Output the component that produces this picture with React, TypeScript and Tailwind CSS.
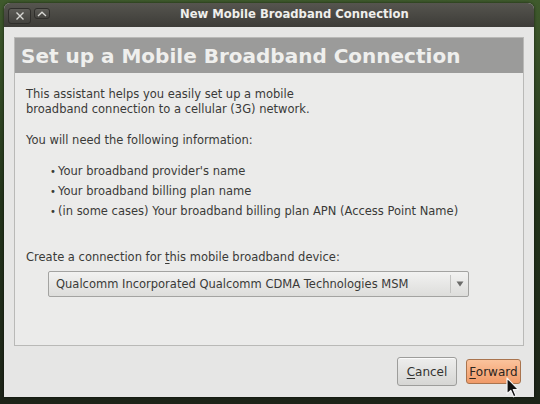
import { ReactNode } from 'react';

const font = { fontFamily: '"DejaVu Sans", Verdana, sans-serif' };

const Bullet = ({ children }: { children: ReactNode }) => (
  <li className="flex h-[20px] items-center">
    <span className="w-[8px] text-[10px]">•</span>
    <span>{children}</span>
  </li>
);

const App = () => {
  return (
    <div
      className="relative w-[540px] h-[404px] overflow-hidden bg-gradient-to-b from-[#3f5a2c] via-[#22331a] to-[#1d2418] pl-[4px] pt-[3px]"
      style={font}
    >
      {/* Window */}
      <div className="w-[530px] h-[394px] rounded-t-[6px] overflow-hidden bg-[#e6e6e5] flex flex-col shadow-[0_0_3px_rgba(0,0,0,0.6)]">
        {/* Title bar */}
        <div className="relative h-[24px] shrink-0 bg-gradient-to-b from-[#56554f] to-[#3d3c38] flex items-center">
          <div className="ml-[4px] mt-[5px] self-start flex gap-[3px]">
            <div className="w-[23px] h-[16px] rounded-[3px] border border-[#2f2e2b] bg-gradient-to-b from-[#5d5c57] to-[#44433f] flex items-center justify-center">
              <svg width="10" height="10" viewBox="0 0 10 10">
                <path d="M1.5 1.5 L8.5 8.5 M8.5 1.5 L1.5 8.5" stroke="#d8d8d4" strokeWidth="1.4" />
              </svg>
            </div>
            <div className="w-[16px] h-[11px] rounded-[3px] border border-[#2f2e2b] bg-gradient-to-b from-[#5d5c57] to-[#44433f] flex items-center justify-center">
              <svg width="10" height="6" viewBox="0 0 10 6">
                <path d="M1 5 L5 1.2 L9 5" stroke="#d8d8d4" strokeWidth="1.3" fill="none" />
              </svg>
            </div>
          </div>
          <span className="absolute left-[176px] top-[6px] text-[11.6px] font-bold text-[#efefec] leading-none">
            New Mobile Broadband Connection
          </span>
        </div>

        {/* Body */}
        <div className="flex-1 px-[10px] pt-[10px] flex flex-col">
          <div className="h-[309px] border border-[#b9b9b7] bg-[#ebebea] flex flex-col">
            <div className="h-[35px] bg-[#9b9b9a] flex items-center px-[6px]">
              <span className="text-[20px] font-bold text-[#efefed] leading-none">
                Set up a Mobile Broadband Connection
              </span>
            </div>
            <div className="pl-[11px] pr-[10px] pt-[14px] text-[11.5px] text-[#3a3a38] leading-[15px]">
              <p>
                This assistant helps you easily set up a mobile
                <br />
                broadband connection to a cellular (3G) network.
              </p>
              <p className="mt-[16px]">You will need the following information:</p>
              <ul className="mt-[13px] pl-[24px]">
                <Bullet>Your broadband provider's name</Bullet>
                <Bullet>Your broadband billing plan name</Bullet>
                <Bullet>(in some cases) Your broadband billing plan APN (Access Point Name)</Bullet>
              </ul>
              <p className="mt-[29px]">
                Create a connection for <span className="underline underline-offset-2">t</span>his mobile broadband device:
              </p>
              <div className="mt-[6px] ml-[22px] w-[421px] h-[26px] rounded-[2px] border border-[#a3a3a1] bg-gradient-to-b from-[#f2f2f1] to-[#dddddb] flex items-center">
                <span className="flex-1 pl-[7px]">Qualcomm Incorporated Qualcomm CDMA Technologies MSM</span>
                <div className="h-[18px] w-px bg-[#c3c3c1]" />
                <div className="w-[17px] flex justify-center">
                  <svg width="8" height="6" viewBox="0 0 8 6">
                    <path d="M0.5 0.5 L7.5 0.5 L4 5.5 Z" fill="#6b6b69" />
                  </svg>
                </div>
              </div>
            </div>
          </div>

          {/* Buttons */}
          <div className="flex justify-end items-start gap-[9px] pt-[11px] pr-[3px] text-[12px] text-[#333331]">
            <button className="w-[60px] h-[29px] rounded-[3px] border border-[#9d9d9b] bg-gradient-to-b from-[#eeeeed] to-[#d6d6d4] flex items-center justify-center shadow-[inset_0_1px_0_#fafafa]">
              <span>
                <span className="underline underline-offset-2">C</span>ancel
              </span>
            </button>
            <button className="mt-[2px] w-[55px] h-[25px] rounded-[3px] border border-[#a9744e] bg-gradient-to-b from-[#fbc39c] to-[#f09a68] flex items-center justify-center text-[#2d2520]">
              <span>
                <span className="underline underline-offset-2">F</span>orward
              </span>
            </button>
          </div>
        </div>
      </div>

      {/* Mouse pointer */}
      <svg className="absolute left-[506px] top-[377px]" width="14" height="22" viewBox="0 0 14 22">
        <path
          d="M1 1 L1 17 L4.8 13.4 L7.6 19.8 L10 18.8 L7.3 12.6 L12.4 12.6 Z"
          fill="#111"
          stroke="#f4f4f4"
          strokeWidth="1.2"
          strokeLinejoin="round"
        />
      </svg>
    </div>
  );
};

export default App;
